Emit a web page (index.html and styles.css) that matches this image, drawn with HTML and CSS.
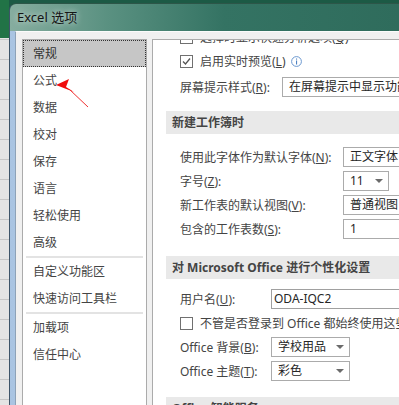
FILE: index.html
```html
<!doctype html>
<html>

<head>
    <title>Excel 选项</title>
    <meta charset="utf-8">
    <link rel="stylesheet" href="styles.css">
</head>

<body>
    <div class="sheet"></div>
    <div class="dialog">
        <div class="titlebar">Excel 选项</div>
        <div class="frame">
            <div class="client">
                <ul class="nav">
                    <li class="current">常规</li>
                    <li>公式</li>
                    <li>数据</li>
                    <li>校对</li>
                    <li>保存</li>
                    <li>语言</li>
                    <li>轻松使用</li>
                    <li>高级</li>
                    <li class="sep"></li>
                    <li>自定义功能区</li>
                    <li>快速访问工具栏</li>
                    <li class="sep"></li>
                    <li>加载项</li>
                    <li>信任中心</li>
                </ul>
                <div class="pane">
                    <div class="group group-ui">
                        <div class="opt">
                            <span class="box"></span>
                            <span>选择时显示快速分析选项(<u>Q</u>)</span>
                        </div>
                        <div class="opt">
                            <span class="box">
                                <svg width="11" height="11" viewBox="0 0 11 11"><path d="M2 5.5 L4.5 8 L9 2.5" fill="none" stroke="#555" stroke-width="1.3"/></svg>
                            </span>
                            <span>启用实时预览(<u>L</u>)</span>
                            <svg class="info" width="11" height="11" viewBox="0 0 11 11">
                                <circle cx="5.5" cy="5.5" r="4.9" fill="none" stroke="#6a97cf" stroke-width="1"/>
                                <rect x="5" y="2.5" width="1.1" height="1.1" fill="#4f82c2"/>
                                <rect x="5" y="4.5" width="1.1" height="4" fill="#4f82c2"/>
                            </svg>
                        </div>
                        <div class="field field-tall">
                            <label>屏幕提示样式(<u>R</u>):</label>
                            <div class="ctl ctl-long">在屏幕提示中显示功能说明</div>
                        </div>
                    </div>

                    <div class="band">新建工作簿时</div>
                    <div class="group group-new">
                        <div class="field">
                            <label>使用此字体作为默认字体(<u>N</u>):</label>
                            <div class="ctl ctl-long">正文字体</div>
                        </div>
                        <div class="field">
                            <label>字号(<u>Z</u>):</label>
                            <div class="ctl ctl-drop ctl-size">11<span class="caret"></span></div>
                        </div>
                        <div class="field">
                            <label>新工作表的默认视图(<u>V</u>):</label>
                            <div class="ctl ctl-long">普通视图</div>
                        </div>
                        <div class="field">
                            <label>包含的工作表数(<u>S</u>):</label>
                            <div class="ctl ctl-long">1</div>
                        </div>
                    </div>

                    <div class="band">对 Microsoft Office 进行个性化设置</div>
                    <div class="group group-me">
                        <div class="field">
                            <label>用户名(<u>U</u>):</label>
                            <div class="ctl ctl-long ctl-text">ODA-IQC2</div>
                        </div>
                        <div class="opt">
                            <span class="box"></span>
                            <span>不管是否登录到 Office 都始终使用这些值</span>
                        </div>
                        <div class="field">
                            <label>Office 背景(<u>B</u>):</label>
                            <div class="ctl ctl-drop ctl-theme">学校用品<span class="caret"></span></div>
                        </div>
                        <div class="field">
                            <label>Office 主题(<u>T</u>):</label>
                            <div class="ctl ctl-drop ctl-theme">彩色<span class="caret"></span></div>
                        </div>
                    </div>

                    <div class="band">Office 智能服务</div>
                </div>
            </div>
        </div>
    </div>

    <svg class="mark" width="399" height="405" viewBox="0 0 399 405">
        <polygon points="56,85 69,79 66,87 74,92" fill="#f00c0c"/>
        <line x1="69" y1="89" x2="88" y2="107" stroke="#f03030" stroke-width="1"/>
    </svg>
</body>

</html>
```

FILE: styles.css
```css
* {
    box-sizing: border-box;
}

body {
    margin: 0;
    width: 399px;
    height: 405px;
    overflow: hidden;
    display: flex;
    position: relative;
    background: #1c5a45;
    font-family: "Noto Sans", "Noto Sans CJK SC", sans-serif;
    font-size: 12px;
    color: #444;
}

/* excel sheet showing behind the dialog */
.sheet {
    flex: none;
    width: 9px;
    background:
        linear-gradient(#217346, #217346) top / 100% 38px no-repeat,
        repeating-linear-gradient(#e4e4e4 0 19px, #c6c6c6 19px 20px);
}

.dialog {
    flex: 1;
    margin-top: 3px;
    display: flex;
    flex-direction: column;
    border-top-left-radius: 7px;
    border-left: 1px solid #3d5468;
    border-top: 1px solid #2c5648;
    overflow: hidden;
}

.titlebar {
    flex: none;
    height: 27px;
    padding-left: 7px;
    line-height: 26px;
    font-size: 13px;
    color: #151515;
    background: linear-gradient(90deg, #86ad9f, #5a9181 25%, #347363 55%, #2f6c5c);
    text-shadow: 0 0 6px rgba(255, 255, 255, .8);
}

.frame {
    flex: 1;
    display: flex;
    padding-left: 5px;
    background: linear-gradient(90deg, #a9c4e2, #cfe2f6);
}

.client {
    flex: 1;
    display: flex;
    gap: 5px;
    padding: 7px 0 0 6px;
    background: #f0f0f0;
    border-left: 1px solid #8da2b8;
    border-top: 1px solid #fbfbfb;
}

/* left navigation */
.nav {
    flex: none;
    width: 125px;
    margin: 0;
    padding: 1px 0 0;
    list-style: none;
    background: #fff;
    border: 1px solid #ababab;
    border-bottom: none;
}

.nav li {
    height: 27px;
    line-height: 27px;
    padding-left: 10px;
    color: #444;
}

.nav li.current {
    margin-top: -1px;
    padding-left: 9px;
    background: #c6c6c6;
    border: 1px dotted #333;
    line-height: 25px;
    color: #333;
}

.nav li.sep {
    height: 2px;
    margin: 0 3px;
    background: #e3e3e3;
}

/* right content */
.pane {
    flex: 1;
    overflow: hidden;
    background: #fff;
    border-left: 1px solid #ababab;
    border-top: 1px solid #ababab;
}

.group {
    padding-left: 27px;
}

.group-ui {
    margin-top: -15px;
    padding-bottom: 10px;
}

.group-new {
    padding-top: 11px;
    padding-bottom: 15px;
}

.group-me {
    padding-top: 8px;
    padding-bottom: 14px;
}

.band {
    height: 23px;
    margin-left: 13px;
    padding-left: 6px;
    line-height: 23px;
    font-weight: bold;
    white-space: nowrap;
    background: #e9e9e9;
}

.opt, .field {
    display: flex;
    align-items: center;
    height: 24px;
    white-space: nowrap;
}

.field-tall {
    height: 28px;
}

.opt .box {
    flex: none;
    width: 13px;
    height: 13px;
    margin-right: 7px;
    border: 1px solid #707070;
    display: flex;
    align-items: center;
    justify-content: center;
}

.info {
    margin-left: 5px;
}

.field label {
    flex: none;
}

.group-ui label {
    width: 102px;
}

.group-new label {
    width: 163px;
}

.group-me label {
    width: 91px;
}

.ctl {
    flex: none;
    height: 20px;
    padding-left: 6px;
    line-height: 18px;
    color: #262626;
    border: 1px solid #ababab;
}

.ctl-long {
    width: 200px;
}

.ctl-text {
    padding-left: 2px;
    border-color: #a0a0a0;
}

.ctl-drop {
    display: flex;
    align-items: center;
    justify-content: space-between;
    padding-right: 5px;
}

.ctl-size {
    width: 46px;
}

.ctl-theme {
    width: 79px;
}

.caret {
    width: 0;
    height: 0;
    border-left: 4px solid transparent;
    border-right: 4px solid transparent;
    border-top: 4px solid #6b6b6b;
}

/* red annotation arrow */
.mark {
    position: absolute;
    left: 0;
    top: 0;
    pointer-events: none;
}
```
